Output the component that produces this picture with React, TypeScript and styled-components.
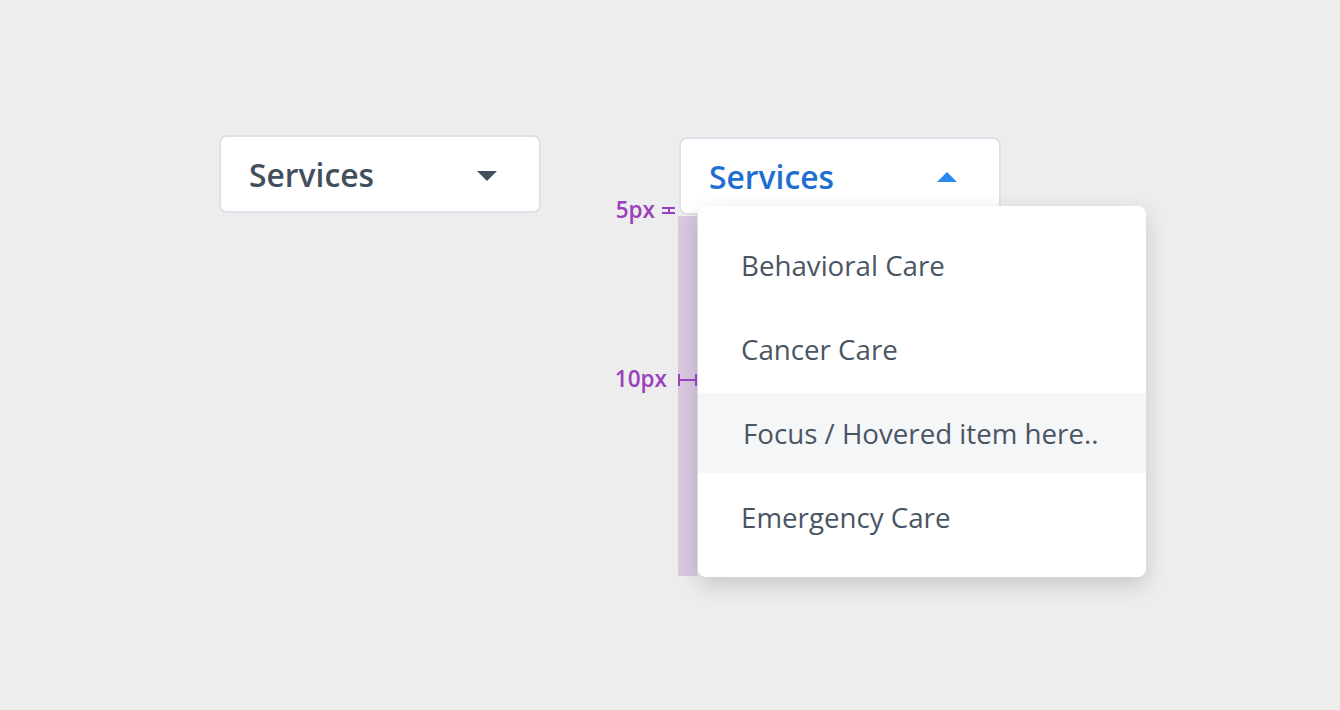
import styled, { createGlobalStyle } from 'styled-components'

const GlobalStyle = createGlobalStyle`
  html, body {
    margin: 0;
    padding: 0;
    background: #ededed;
    font-family: "Open Sans", "Noto Sans", "Liberation Sans", sans-serif;
  }
`

const Page = styled.div`
  width: 1340px;
  height: 710px;
  box-sizing: border-box;
  padding: 135px 0 0 219px;
  display: flex;
  align-items: flex-start;
  gap: 138px;
  overflow: hidden;
`

const SelectWrap = styled.div<{ $offset?: number }>`
  position: relative;
  margin-top: ${p => p.$offset || 0}px;
`

const SelectBox = styled.div<{ $open?: boolean }>`
  width: 322px;
  height: 78px;
  box-sizing: border-box;
  background: #fff;
  border: 2px solid #dfe1ea;
  border-radius: 8px;
  display: flex;
  align-items: center;
  justify-content: space-between;
  padding: 0 42px 0 28px;
  font-size: 31.8px;
  font-weight: 600;
  color: ${p => (p.$open ? '#1f6fd0' : '#434f5c')};
`

const Caret = styled.span<{ $up?: boolean }>`
  width: 0;
  height: 0;
  border-left: 10px solid transparent;
  border-right: 10px solid transparent;
  ${p =>
    p.$up
      ? 'border-bottom: 10px solid #2a8af2; margin-top: 1px;'
      : 'border-top: 10px solid #434f5c; margin-top: 4px;'}
`

const Menu = styled.ul`
  position: absolute;
  left: 19px;
  top: 69px;
  width: 448px;
  margin: 0;
  padding: 19px 0 20px;
  box-sizing: border-box;
  list-style: none;
  background: #fff;
  border-radius: 8px;
  box-shadow: 0 8px 22px rgba(0, 0, 0, 0.16);
  display: flex;
  flex-direction: column;
  gap: 4px;
  z-index: 2;
`

const Item = styled.li<{ $hover?: boolean }>`
  height: 80px;
  display: flex;
  align-items: center;
  padding-left: ${p => (p.$hover ? 45 : 43)}px;
  font-size: 27.7px;
  color: #4a5563;
  background: ${p => (p.$hover ? '#f5f6f8' : 'transparent')};
`

const Guide = styled.div`
  position: absolute;
  left: -1px;
  top: 79px;
  width: 19px;
  height: 360px;
  background: #d8c8e0;
  z-index: 1;
`

const Label = styled.span<{ $top: number; $right: number }>`
  position: absolute;
  top: ${p => p.$top}px;
  right: ${p => p.$right}px;
  font-size: 22.5px;
  font-weight: 600;
  color: #9a40bd;
  line-height: 1;
  white-space: nowrap;
  z-index: 3;
`

const Marker = styled.span`
  position: absolute;
  top: 237px;
  left: -1px;
  width: 19px;
  height: 12px;
  box-sizing: border-box;
  z-index: 3;
  display: flex;
  align-items: center;
  border-left: 2px solid #9a40bd;
  border-right: 2px solid #9a40bd;
  &::before {
    content: '';
    display: block;
    width: 100%;
    height: 2px;
    background: #9a40bd;
  }
`

const MarkerV = styled.span`
  position: absolute;
  top: 70px;
  left: -17px;
  width: 13px;
  height: 7px;
  box-sizing: border-box;
  border-top: 2px solid #9a40bd;
  border-bottom: 2px solid #9a40bd;
  display: flex;
  justify-content: center;
  z-index: 3;
  &::before {
    content: '';
    width: 2px;
    height: 100%;
    background: #9a40bd;
  }
`

const items = ['Behavioral Care', 'Cancer Care', 'Focus / Hovered item here..', 'Emergency Care']

export default function App() {
  return (
    <>
      <GlobalStyle />
      <Page>
        <SelectWrap>
          <SelectBox>
            Services
            <Caret />
          </SelectBox>
        </SelectWrap>
        <SelectWrap $offset={2}>
          <SelectBox $open>
            Services
            <Caret $up />
          </SelectBox>
          <Guide />
          <Label $top={62} $right={346}>5px</Label>
          <MarkerV />
          <Label $top={231} $right={334}>10px</Label>
          <Marker />
          <Menu>
            {items.map((t, i) => (
              <Item key={t} $hover={i === 2}>
                {t}
              </Item>
            ))}
          </Menu>
        </SelectWrap>
      </Page>
    </>
  )
}
